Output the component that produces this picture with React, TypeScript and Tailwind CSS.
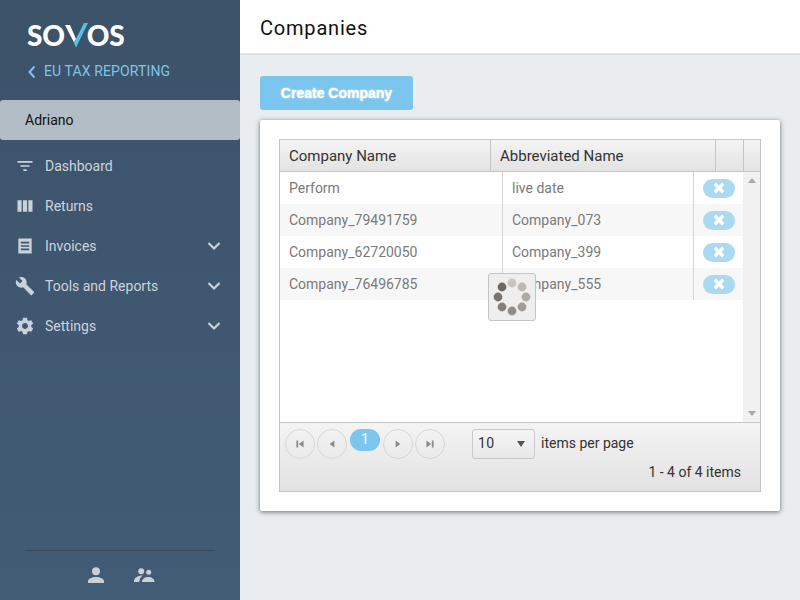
import React from "react";

const navIcon = "w-[20px] h-[20px] fill-[#c9d1d9] shrink-0";

function Chevron() {
  return (
    <svg viewBox="0 0 24 24" className="w-[24px] h-[24px] ml-auto mr-[1px] fill-none stroke-[#c9d1d9] stroke-[2.2]">
      <path d="M6.5 9l5.5 5.5L17.500 9" />
    </svg>
  );
}

function NavItem({ label, icon, chevron }: { label: string; icon: React.ReactNode; chevron?: boolean }) {
  return (
    <div className="h-[40px] flex items-center pl-[15px] pr-[13px] text-[14px] text-[#ccd4db]">
      {icon}
      <span className="ml-[10px]">{label}</span>
      {chevron && <Chevron />}
    </div>
  );
}

function Logo() {
  return (
    <div className="flex items-start h-[25px] text-white text-[28px] leading-[22px] font-black tracking-[-0.2px] font-['Lato',sans-serif]">
      <span>SO</span>
      <svg viewBox="0 0 24 25" className="w-[24px] h-[25px] -mx-[1px] -mt-[1px]">
        <path d="M1 2h5l6 14-2 3.500z" fill="#ffffff" />
        <path d="M20 0h4L12 24.500 10 20z" fill="#59bfe8" />
      </svg>
      <span>OS</span>
    </div>
  );
}

function PagerBtn({ d }: { d: string }) {
  return (
    <div className="w-[30px] h-[30px] rounded-full border border-[#d6d6d6] flex items-center justify-center">
      <svg viewBox="0 0 10 10" className="w-[12px] h-[12px] fill-[#8f8a86]">
        <path d={d} />
      </svg>
    </div>
  );
}

function Row({ a, b, alt }: { a: string; b: string; alt?: boolean }) {
  return (
    <div className={`h-[32px] flex items-center text-[14px] text-[#7a7a7a] ${alt ? "bg-[#f7f7f7]" : "bg-white"}`}>
      <div className="w-[223px] h-full flex items-center pl-[9px] border-r border-[#d5d5d5]">{a}</div>
      <div className="w-[191px] h-full flex items-center pl-[9px] border-r border-[#d5d5d5]">{b}</div>
      <div className="flex-1 flex justify-center">
        <div className="w-[32px] h-[19px] rounded-full bg-[#aad9f2] flex items-center justify-center">
          <svg viewBox="0 0 10 10" className="w-[12px] h-[12px] stroke-white stroke-[2.8] fill-none">
            <path d="M1.500 1.500l7 7M8.500 1.500l-7 7" />
          </svg>
        </div>
      </div>
    </div>
  );
}

function Spinner() {
  const dots = [
    { x: 24, y: 10, c: "#c9c5c2" },
    { x: 34, y: 14, c: "#bdb9b5" },
    { x: 38, y: 24, c: "#aeaaa6" },
    { x: 34, y: 34, c: "#a09b97" },
    { x: 24, y: 38, c: "#928c88" },
    { x: 14, y: 34, c: "#857e79" },
    { x: 10, y: 24, c: "#7a726d" },
    { x: 14, y: 14, c: "#70675f" },
  ];
  return (
    <div className="absolute left-[208px] top-[133px] w-[48px] h-[48px] rounded-[3px] border border-[#c4c4c4] bg-[#eeeeee]">
      <svg viewBox="0 0 46 46" className="w-[46px] h-[46px]">
        {dots.map((d, i) => (
          <circle key={i} cx={d.x - 1} cy={d.y - 1} r="4.400" fill={d.c} />
        ))}
      </svg>
    </div>
  );
}

export default function App() {
  return (
    <div className="w-[800px] h-[600px] overflow-hidden flex bg-[#e9edf0] font-['Roboto',sans-serif]">
      <aside className="w-[240px] h-full bg-gradient-to-b from-[#3c5269] to-[#425c76] flex flex-col shrink-0">
        <div className="pl-[27px] pt-[24px] h-[100px]">
          <Logo />
          <div className="flex items-center mt-[12px] text-[14px] tracking-[0.12px] text-[#7fc4ec]">
            <svg viewBox="0 0 10 14" className="w-[10px] h-[14px] mr-[7px] fill-none stroke-[#7fc4ec] stroke-[2]">
              <path d="M7.500 1.500L2.500 7l5 5.500" />
            </svg>
            <span>EU TAX REPORTING</span>
          </div>
        </div>
        <div className="h-[40px] bg-[#b3bdc5] rounded-[3px] flex items-center pl-[25px] text-[14px] text-[#111111]">
          Adriano
        </div>
        <nav className="pt-[6px]">
          <NavItem
            label="Dashboard"
            icon={<svg viewBox="0 0 24 24" className={navIcon}><path d="M3 6h18v2H3zM6.500 11h11v2h-11zM10 16h4v2h-4z" /></svg>}
          />
          <NavItem
            label="Returns"
            icon={<svg viewBox="0 0 24 24" className={navIcon}><path d="M3 5h5v14H3zM9.500 5h5v14h-5zM16 5h5v14h-5z" /></svg>}
          />
          <NavItem
            label="Invoices"
            chevron
            icon={<svg viewBox="0 0 24 24" className={navIcon}><path fillRule="evenodd" d="M4 3h16v18H4zM7 7v2h10V7zm0 4v2h10v-2zm0 4v2h10v-2z" /></svg>}
          />
          <NavItem
            label="Tools and Reports"
            chevron
            icon={<svg viewBox="0 0 24 24" className={navIcon}><path d="M22.700 19l-9.100-9.100c.9-2.300.4-5-1.500-6.900-2-2-5-2.400-7.400-1.300L9 6 6 9 1.600 4.700C.4 7.100.9 10.100 2.900 12.100c1.900 1.900 4.600 2.400 6.900 1.500l9.100 9.100c.4.400 1 .4 1.400 0l2.300-2.300c.5-.4.500-1.100.1-1.400z" /></svg>}
          />
          <NavItem
            label="Settings"
            chevron
            icon={<svg viewBox="0 0 24 24" className={navIcon}><path d="M19.430 12.980c.04-.32.07-.64.07-.98s-.03-.66-.07-.98l2.110-1.650c.19-.15.24-.42.12-.64l-2-3.460c-.12-.22-.39-.3-.61-.22l-2.490 1c-.52-.4-1.080-.73-1.690-.98l-.38-2.650C14.460 2.180 14.250 2 14 2h-4c-.25 0-.46.18-.49.42l-.38 2.650c-.61.25-1.170.59-1.690.98l-2.490-1c-.23-.09-.49 0-.61.22l-2 3.460c-.13.22-.07.49.12.64l2.110 1.650c-.04.32-.07.65-.07.98s.03.660.07.980l-2.110 1.650c-.19.150-.24.420-.12.640l2 3.460c.12.220.39.300.61.220l2.490-1c.52.400 1.080.730 1.690.980l.38 2.650c.03.240.24.420.49.420h4c.25 0 .46-.180.49-.420l.38-2.650c.61-.250 1.170-.590 1.690-.980l2.490 1c.23.090.49 0 .61-.220l2-3.460c.12-.220.070-.490-.12-.640zM12 15.500c-1.930 0-3.500-1.570-3.500-3.500s1.570-3.500 3.500-3.500 3.500 1.570 3.500 3.500-1.570 3.500-3.500 3.500z" /></svg>}
          />
        </nav>
        <div className="mt-auto mx-[25px] h-[50px] border-t border-[#38495c] flex items-start justify-center pt-[16px] gap-[30px]">
          <svg viewBox="0 0 16 16" className="w-[16px] h-[16px] fill-[#c9d1d9] ml-[3px]">
            <circle cx="8" cy="4.200" r="4" />
            <path d="M0 16v-1.500C0 11.500 4 10 8 10s8 1.500 8 4.500V16z" />
          </svg>
          <svg viewBox="0 0 21 15" className="w-[21px] h-[15px] fill-[#c9d1d9] mt-[1px]">
            <circle cx="7.200" cy="3.200" r="3" />
            <circle cx="14.700" cy="4.300" r="2.500" />
            <path d="M0 14v-1c0-3 3-5.500 9-5.500-2 1-3.500 3-3.800 6.500zM8 14c0-3 2.800-5 6.300-5s6.200 2 6.200 5z" />
          </svg>
        </div>
      </aside>

      <main className="flex-1 min-w-0 flex flex-col">
        <header className="h-[55px] shrink-0 bg-white border-b-2 border-[#dfe2e5] flex items-center pl-[20px] text-[20px] tracking-[0.8px] text-[#111111] pt-[3px]">
          Companies
        </header>
        <div className="pl-[20px] pt-[21px]">
          <button className="w-[153px] h-[34px] rounded-[3px] bg-[#7cc5ec] text-white font-bold text-[14px] font-['Liberation_Sans',sans-serif] [text-shadow:0_0_2px_#ffffff]">
            Create Company
          </button>
          <section className="mt-[10px] w-[520px] h-[391px] bg-white rounded-[2px] shadow-[0_1px_5px_rgba(0,0,0,0.55)] pt-[19px] pl-[19px]">
            <div className="relative w-[482px] h-[353px] border border-[#c5c5c5] flex flex-col">
              <div className="h-[32px] shrink-0 flex border-b border-[#c5c5c5] bg-gradient-to-b from-[#f4f4f4] to-[#e3e3e3] text-[15px] text-[#333333]">
                <div className="w-[211px] flex items-center pl-[9px] pt-[2px] border-r border-[#c5c5c5]">Company Name</div>
                <div className="w-[225px] flex items-center pl-[9px] pt-[2px] border-r border-[#c5c5c5]">Abbreviated Name</div>
                <div className="w-[28px] border-r border-[#c5c5c5]" />
                <div className="flex-1" />
              </div>
              <div className="h-[250px] shrink-0 flex">
                <div className="w-[463px]">
                  <Row a="Perform" b="live date" />
                  <Row a="Company_79491759" b="Company_073" alt />
                  <Row a="Company_62720050" b="Company_399" />
                  <Row a="Company_76496785" b="Company_555" alt />
                </div>
                <div className="flex-1 bg-[#f1f1f1] flex flex-col items-center justify-between py-[6px]">
                  <div className="w-0 h-0 border-x-[4px] border-x-transparent border-b-[5px] border-b-[#a9a9a9]" />
                  <div className="w-0 h-0 border-x-[4px] border-x-transparent border-t-[5px] border-t-[#a9a9a9]" />
                </div>
              </div>
              <div className="flex-1 border-t border-[#c5c5c5] bg-gradient-to-b from-[#f4f4f4] to-[#e2e2e2] relative text-[14px] text-[#333333]">
                <div className="flex items-start pt-[6px] pl-[5px]">
                  <div className="flex gap-[2px]">
                    <PagerBtn d="M2 2h1.500v6H2zM8 2v6L4 5z" />
                    <PagerBtn d="M7 2v6L3 5z" />
                    <div className="w-[30px] h-[22px] rounded-full bg-[#7cc5ec] text-white text-[14px] leading-[20px] text-center mx-[1px]">1</div>
                    <PagerBtn d="M3 2v6l4-3z" />
                    <PagerBtn d="M2 2v6l4-3zM6.500 2H8v6H6.500z" />
                  </div>
                  <div className="ml-[27px] w-[63px] h-[30px] rounded-[3px] border border-[#c9c9c9] bg-gradient-to-b from-[#f5f5f5] to-[#e8e8e8] flex items-center pl-[5px] pr-[9px] pb-[2px] text-[#333333]">
                    <span className="tracking-[0.5px]">10</span>
                    <span className="ml-auto mt-[2px] w-0 h-0 border-x-[4px] border-x-transparent border-t-[6px] border-t-[#555555]" />
                  </div>
                  <span className="ml-[6px] leading-[28px]">items per page</span>
                </div>
                <div className="absolute right-[19px] top-[41px] leading-[17px]">1 - 4 of 4 items</div>
              </div>
              <Spinner />
            </div>
          </section>
        </div>
      </main>
    </div>
  );
}
